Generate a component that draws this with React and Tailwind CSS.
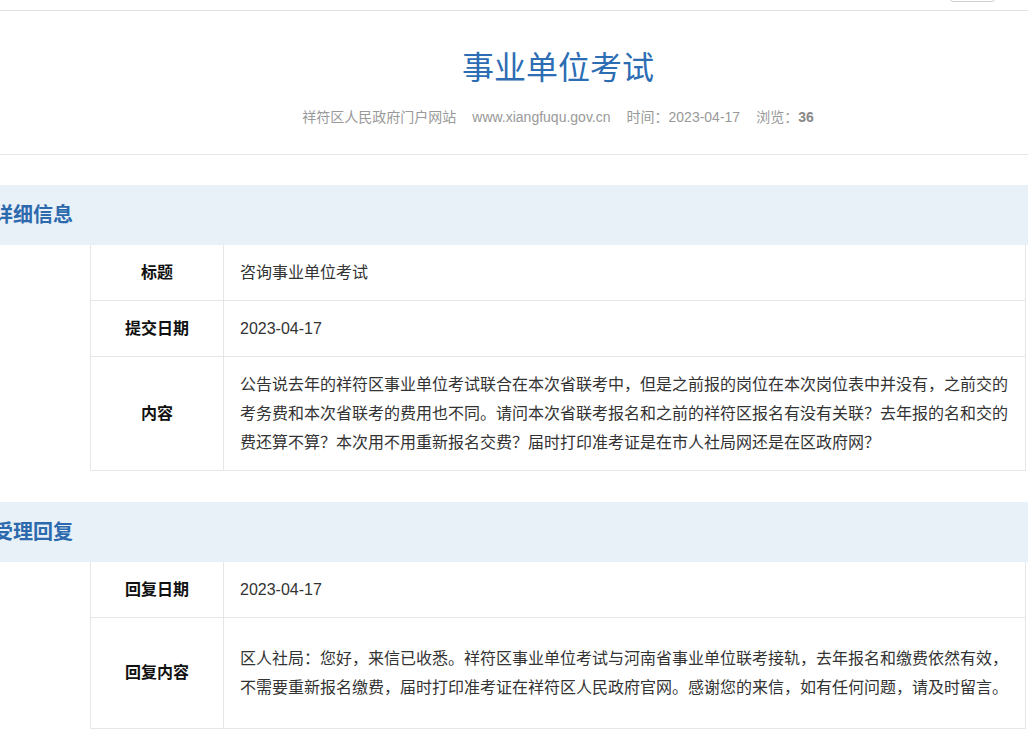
import React from "react";

const font = { fontFamily: '"Liberation Sans", "Noto Sans CJK SC", sans-serif' };

function Row({ label, children, py = "py-[13px]" }) {
  return (
    <div className="flex border-b border-[#e6e6e6] last:border-b-0">
      <div className="w-[133px] shrink-0 flex items-center justify-center border-r border-[#e6e6e6] text-[16px] font-bold text-[#111]">
        {label}
      </div>
      <div className={`flex-1 pl-4 pr-3 ${py} text-[16px] leading-[29px] text-[#333]`}>{children}</div>
    </div>
  );
}

function Band({ title }) {
  return (
    <div className="h-[60px] bg-[#e8f0f8] flex items-center">
      <span className="-ml-[7px] text-[20px] font-bold text-[#2c6aad]">{title}</span>
    </div>
  );
}

export default function App() {
  return (
    <div className="w-[1028px] h-[731px] overflow-hidden bg-white relative" style={font}>
      <div className="absolute left-[950px] top-[-20px] w-[45px] h-[22px] border border-[#d0d0d0] rounded-[3px]" />
      <div className="h-[11px] border-b border-[#e2e2e2]" />
      <div className="pl-[88px] text-center">
        <h1 className="pt-[35px] text-[32px] leading-[44px] text-[#2c6db3]">事业单位考试</h1>
        <div className="mt-[17px] text-[14px] leading-[20px] text-[#999] flex justify-center gap-4">
          <span>祥符区人民政府门户网站</span>
          <span>www.xiangfuqu.gov.cn</span>
          <span>时间：2023-04-17</span>
          <span>
            浏览：<b className="text-[#888]">36</b>
          </span>
        </div>
      </div>
      <div className="mt-[27px] border-b border-[#e6e6e6]" />
      <div className="mt-[30px]">
        <Band title="详细信息" />
        <div className="ml-[90px] w-[936px] border border-[#e6e6e6] border-t-0">
          <Row label="标题">咨询事业单位考试</Row>
          <Row label="提交日期">2023-04-17</Row>
          <Row label="内容">
            公告说去年的祥符区事业单位考试联合在本次省联考中，但是之前报的岗位在本次岗位表中并没有，之前交的
            <br />
            考务费和本次省联考的费用也不同。请问本次省联考报名和之前的祥符区报名有没有关联？去年报的名和交的
            <br />
            费还算不算？本次用不用重新报名交费？届时打印准考证是在市人社局网还是在区政府网？
          </Row>
        </div>
      </div>
      <div className="mt-[31px]">
        <Band title="受理回复" />
        <div className="ml-[90px] w-[936px] border border-[#e6e6e6] border-t-0">
          <Row label="回复日期">2023-04-17</Row>
          <Row label="回复内容" py="py-[26px]">
            区人社局：您好，来信已收悉。祥符区事业单位考试与河南省事业单位联考接轨，去年报名和缴费依然有效，
            <br />
            不需要重新报名缴费，届时打印准考证在祥符区人民政府官网。感谢您的来信，如有任何问题，请及时留言。
          </Row>
        </div>
      </div>
    </div>
  );
}
